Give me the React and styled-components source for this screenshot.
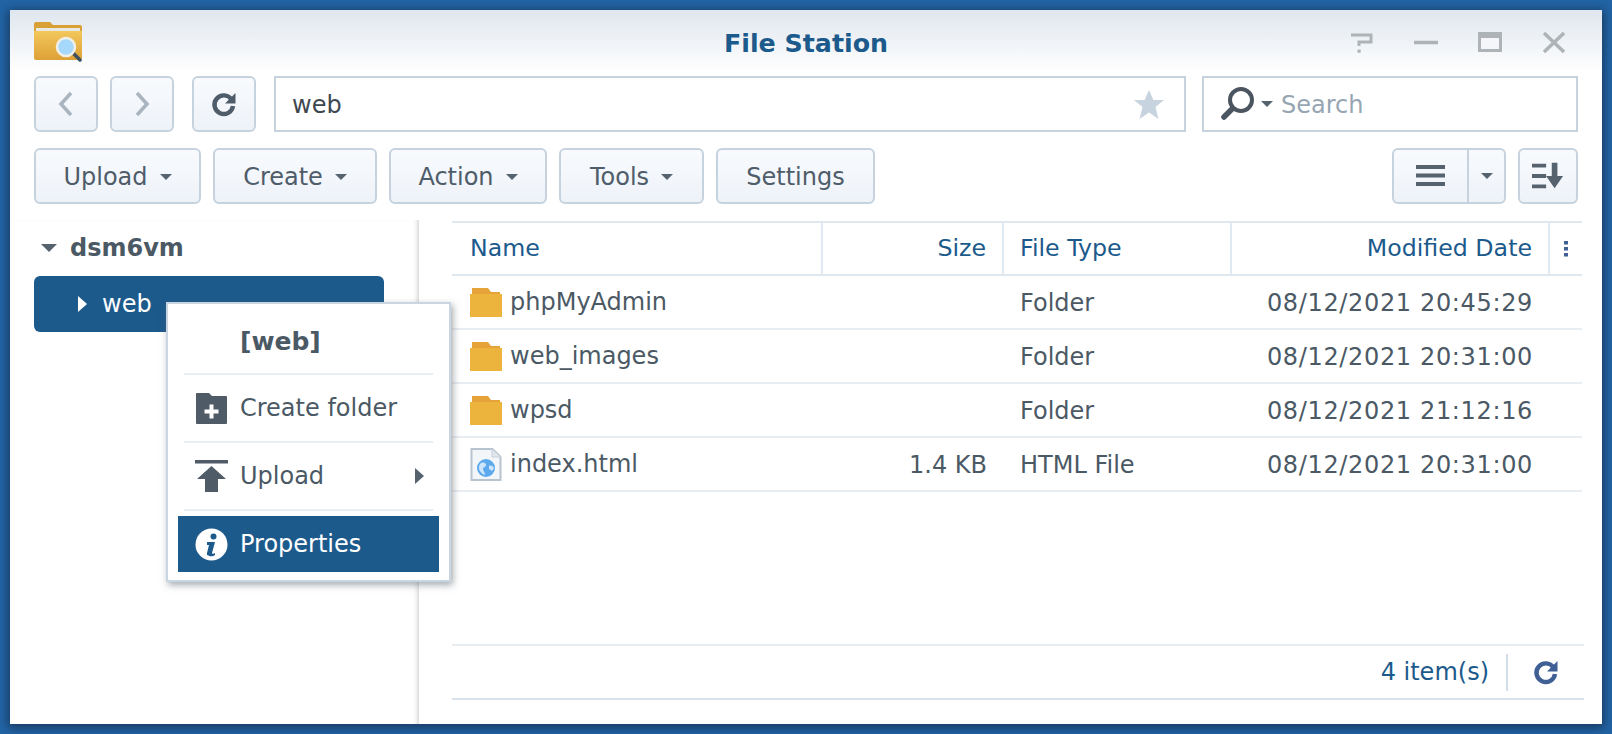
import React from 'react';
import styled, { createGlobalStyle } from 'styled-components';

const Global = createGlobalStyle`
  html, body { margin: 0; height: 734px; overflow: hidden; background: #2264a5; }
  #root { height: 734px; }
  * { box-sizing: border-box; }
`;
const Desktop = styled.div`
  width: 1612px; height: 734px; padding: 10px;
  background: #2264a5;
  font-family: "DejaVu Sans", Verdana, sans-serif;
`;
const Win = styled.div`
  width: 1592px; height: 714px; background: #fff; display: flex; flex-direction: column;
  box-shadow: 0 2px 9px 2px rgba(20, 45, 75, .75);
`;
const Head = styled.div`
  padding: 0 24px; background: linear-gradient(#dfe6ee 0, #fff 62px);
`;
const TitleBar = styled.div`
  height: 66px; display: grid; grid-template-columns: 1fr auto 1fr; align-items: center; margin: 0 0 0 0;
`;
const AppIcon = styled.svg` width: 49px; height: 40px; margin-top: -2px; `;
const Title = styled.div`
  font-weight: 700; font-size: 25.3px; color: #1c5a8c;
`;
const Controls = styled.div`
  display: flex; align-items: center; gap: 40px; margin: 0 12px 0 0; justify-self: end;
`;
const Ctl = styled.svg` width: 24px; height: 22px; display: block; `;
const NavRow = styled.div` display: flex; height: 56px; margin-bottom: 16px; `;
const Btn = styled.div`
  display: flex; align-items: center; justify-content: center; flex: none;
  width: ${p => p.$w}px; height: 56px; margin-right: ${p => p.$mr ?? 12}px;
  border: 2px solid #c6d3df; border-radius: 6px; padding-top: ${p => p.$text ? 2 : 0}px;
  background: linear-gradient(#f8fafd, #eef3f9);
  color: #4f5c69; font-size: 24px;
`;
const Caret = styled.i`
  width: 0; height: 0; display: inline-block; flex: none;
  margin-left: ${p => p.$ml ?? 12}px;
  border-left: ${p => p.$s || 6}px solid transparent; border-right: ${p => p.$s || 6}px solid transparent;
  border-top: ${p => p.$s || 6}px solid ${p => p.$c || '#56626e'};
`;
const PathBox = styled.div`
  width: 912px; height: 56px; margin-right: 16px; flex: none;
  border: 2px solid #c6d3df; background: #fff;
  display: flex; align-items: center; justify-content: space-between;
  padding: 0 20px 0 16px; font-size: 24px; color: #3d4750;
`;
const PathText = styled.span` margin-top: 2px; `;
const SearchBox = styled.div`
  width: 376px; height: 56px; flex: none;
  border: 2px solid #c6d3df; background: #fff;
  display: flex; align-items: center; padding-left: 16px;
  font-size: 24px; color: #97a6b3;
`;
const SearchLabel = styled.span` margin: 2px 0 0 8px; `;
const Toolbar = styled.div` display: flex; height: 56px; `;
const Spacer = styled.div` flex: 1; `;
const ViewGroup = styled.div`
  display: flex; width: 114px; height: 56px; margin-right: 12px; flex: none;
  border: 2px solid #c6d3df; border-radius: 6px; background: linear-gradient(#f8fafd, #eef3f9);
`;
const ViewPart = styled.div`
  display: flex; align-items: center; justify-content: center; 
  width: ${p => p.$w}px; border-left: ${p => p.$div ? '2px solid #c6d3df' : 'none'};
`;
const Content = styled.div` flex: 1; display: flex; min-height: 0; margin-top: 16px; `;
const Side = styled.div`
  width: 409px; flex: none; padding: 0 35px 0 24px;
  box-shadow: inset -5px 0 5px -4px rgba(120,120,120,.4);
`;
const Root = styled.div`
  height: 56px; display: flex; align-items: center; padding-left: 7px;
  font-weight: 700; font-size: 24px; color: #4b5965;
`;
const RootLabel = styled.span` margin-left: 13px; `;
const Selected = styled.div`
  height: 56px; border-radius: 6px; background: #1d5a8c; color: #fff;
  display: flex; align-items: center; padding-left: 44px; font-size: 24px;
`;
const Arrow = styled.i`
  width: 0; height: 0; display: inline-block; flex: none; margin-right: 15px;
  border-top: 8.5px solid transparent; border-bottom: 8.5px solid transparent;
  border-left: 9px solid ${p => p.$c};
`;
const Main = styled.div`
  flex: 1; display: flex; flex-direction: column; padding: 1px 18px 24px 33px; min-width: 0;
`;
const Grid = styled.div` flex: 1; `;
const Cols = `display: grid; grid-template-columns: 371px 181px 228px 318px 32px;`;
const HeaderRow = styled.div`
  ${Cols} height: 55px; margin-right: 2px;
  border-top: 2px solid #dfe7ef; border-bottom: 2px solid #dfe7ef;
  color: #1c5a8c; font-size: 23.7px;
`;
const HCell = styled.div`
  display: flex; align-items: center; 
  justify-content: ${p => p.$right ? 'flex-end' : p.$center ? 'center' : 'flex-start'};
  padding: ${p => p.$center ? '0' : p.$right ? '0 16px 2px 0' : `0 0 2px ${p.$first ? 18 : 16}px`};
  border-right: ${p => p.$last ? 'none' : '2px solid #dfe9f3'};
`;
const Row = styled.div`
  ${Cols} height: 54px; margin-right: 2px; border-bottom: 2px solid #e8edf2;
  color: #4b5965; font-size: 24px;
`;
const Cell = styled.div`
  display: flex; align-items: center; padding-top: 2px;
  justify-content: ${p => p.$right ? 'flex-end' : 'flex-start'};
  padding-left: ${p => p.$right ? 0 : 16}px;
  padding-right: ${p => p.$right ? 17 : 0}px;
  letter-spacing: ${p => p.$date ? '.65px' : '0'};
`;
const NameCell = styled(Cell)` padding-left: 18px; padding-top: 0; gap: 8px; `;
const NameText = styled.span` margin-top: -1px; `;
const Footer = styled.div`
  height: 56px; border-top: 2px solid #e8edf2; border-bottom: 2px solid #d9e2eb;
  display: flex; align-items: center; justify-content: flex-end; 
  color: #1c5a8c; font-size: 24px;
`;
const FootDiv = styled.div` width: 2px; height: 37px; background: #d2dde8; margin: 0 24px 0 17px; `;
const FootIcon = styled.svg` width: 28px; height: 28px; margin-right: 24px; `;
const Menu = styled.div`
  position: absolute; left: 166px; top: 302px; width: 285px; height: 280px;
  padding: 6px 10px 0; background: #fff; border: 2px solid #c9d5e0;
  box-shadow: 2px 3px 7px rgba(90,100,110,.55); color: #4b5965; font-size: 24px;
`;
const MenuHead = styled.div`
  height: 58px; padding: 5px 0 0 62px; display: flex; align-items: center; font-weight: 700; font-size: 25px;
`;
const Sep = styled.div` height: 2px; margin: 5px 6px; background: #e8edf2; `;
const Item = styled.div`
  height: 56px; display: flex; align-items: center; padding-left: 17px; gap: 12px;
  background: ${p => p.$active ? '#1d5a8c' : 'transparent'};
  color: ${p => p.$active ? '#fff' : 'inherit'};
`;
const ItemIcon = styled.svg` width: 33px; height: 33px; flex: none; `;
const ItemLabel = styled.span` flex: 1; `;

const Refresh = ({ c = '#4f5c69', s = 28 }) => (
  <svg width={s} height={s} viewBox="0 0 28 28">
    <path d="M21.5 9.5A9.3 9.3 0 1 0 23 16" fill="none" stroke={c} strokeWidth="4.4" />
    <path d="M25.5 3v10.5H15z" fill={c} />
  </svg>
);
const FolderI = () => (
  <svg width="32" height="29" viewBox="0 0 32 29" style={{ flex: 'none' }}>
    <path d="M2 0h16l3 4h9v3H2z" fill="#e5a33a" />
    <path d="M0 6h32v23H0z" fill="#ecb43d" />
  </svg>
);
const HtmlI = () => (
  <svg width="32" height="33" viewBox="0 0 32 33" style={{ flex: 'none' }}>
    <path d="M1.5 1h21L30.5 9v23h-29z" fill="#f3f6f9" stroke="#b7c3cf" strokeWidth="2" />
    <path d="M22 1v8h8.5" fill="#dfe6ed" stroke="#c6d0da" strokeWidth="1" />
    <circle cx="16" cy="20" r="9" fill="#5ca9ee" />
    <path d="M11 15c3-1 5 0 5 2s-3 2-3 4 2 3 2 6c-3-1-6-4-6-7s1-4 2-5zM19 18c2-1 4 0 5 2l-2 3-3-2z" fill="#cfe6fa" />
  </svg>
);

const rows = [
  ['phpMyAdmin', '', 'Folder', '08/12/2021 20:45:29'],
  ['web_images', '', 'Folder', '08/12/2021 20:31:00'],
  ['wpsd', '', 'Folder', '08/12/2021 21:12:16'],
  ['index.html', '1.4 KB', 'HTML File', '08/12/2021 20:31:00'],
];

export default function App() {
  return (
    <Desktop>
      <Global />
      <Win>
        <Head>
          <TitleBar>
            <AppIcon viewBox="0 0 49 40">
              <defs>
                <linearGradient id="af" x1="0" y1="0" x2="0" y2="1">
                  <stop offset="0" stopColor="#f2c75c" />
                  <stop offset="1" stopColor="#dda136" />
                </linearGradient>
              </defs>
              <path d="M0 2q0-2 2-2h14l3 3h27q2 0 2 2v6H0z" fill="#d9a036" />
              <path d="M2 6h44v3.500H2z" fill="#e9e9e4" />
              <path d="M0 9h48v27q0 2-2 2H2q-2 0-2-2z" fill="url(#af)" />
              <path d="M37 29l9 9" stroke="#3f5060" strokeWidth="3.500" strokeLinecap="round" />
              <circle cx="32" cy="25" r="9" fill="#a5d8fb" stroke="#f1efe6" strokeWidth="2.500" />
            </AppIcon>
            <Title>File Station</Title>
            <Controls>
              <Ctl viewBox="0 0 24 22"><path d="M1 3h20v7H9v4" fill="none" stroke="#aeb3b8" strokeWidth="3" /><path d="M7.500 17.500h3.200v3.200H7.500z" fill="#aeb3b8" /></Ctl>
              <Ctl viewBox="0 0 24 22"><path d="M0 10.500h24" stroke="#aeb3b8" strokeWidth="3.500" /></Ctl>
              <Ctl viewBox="0 0 24 22"><path d="M0 0h24v20H0z" fill="#aeb3b8" /><path d="M3 6h18v11H3z" fill="#f4f6f9" /></Ctl>
              <Ctl viewBox="0 0 24 22"><path d="M2 1l20 19M22 1L2 20" stroke="#aeb3b8" strokeWidth="3.500" /></Ctl>
            </Controls>
          </TitleBar>
          <NavRow>
            <Btn $w={64}><svg width="16" height="26" viewBox="0 0 16 26"><path d="M13 2L3 13l10 11" fill="none" stroke="#a9b4bf" strokeWidth="3.500" /></svg></Btn>
            <Btn $w={64} $mr={18}><svg width="16" height="26" viewBox="0 0 16 26"><path d="M3 2l10 11L3 24" fill="none" stroke="#a9b4bf" strokeWidth="3.500" /></svg></Btn>
            <Btn $w={64} $mr={18}><Refresh /></Btn>
            <PathBox>
              <PathText>web</PathText>
              <svg width="30" height="29" viewBox="0 0 30 29"><path d="M15 0l4.400 10H30l-8.500 7 3 12L15 22.500 5.500 29l3-12L0 10h10.600z" fill="#c7d3de" /></svg>
            </PathBox>
            <SearchBox>
              <svg width="34" height="34" viewBox="0 0 34 34"><circle cx="21" cy="13" r="11" fill="none" stroke="#4a5560" strokeWidth="4" /><path d="M12 22L4 30" stroke="#4a5560" strokeWidth="5.500" strokeLinecap="round" /></svg>
              <Caret $ml={7} />
              <SearchLabel>Search</SearchLabel>
            </SearchBox>
          </NavRow>
          <Toolbar>
            <Btn $w={167} $text>Upload<Caret /></Btn>
            <Btn $w={164} $text>Create<Caret /></Btn>
            <Btn $w={158} $text>Action<Caret /></Btn>
            <Btn $w={145} $text>Tools<Caret /></Btn>
            <Btn $w={159} $text>Settings</Btn>
            <Spacer />
            <ViewGroup>
              <ViewPart $w={73}><svg width="30" height="22" viewBox="0 0 30 22"><path d="M0 0h29v4H0zM0 8.500h29v4H0zM0 17h29v4H0z" fill="#56626e" /></svg></ViewPart>
              <ViewPart $w={37} $div><Caret $ml={0} /></ViewPart>
            </ViewGroup>
            <Btn $w={60} $mr={0}><svg width="32" height="28" viewBox="0 0 34 28"><path d="M0 1h15v4H0zM0 12h15v4H0zM0 23h15v4H0zM21 0h6v14h6l-9 13-9-13h6z" fill="#56626e" /></svg></Btn>
          </Toolbar>
        </Head>
        <Content>
          <Side>
            <Root><Caret $ml={0} $s={8} /><RootLabel>dsm6vm</RootLabel></Root>
            <Selected><Arrow $c="#fff" />web</Selected>
          </Side>
          <Main>
            <Grid>
              <HeaderRow>
                <HCell $first>Name</HCell>
                <HCell $right>Size</HCell>
                <HCell>File Type</HCell>
                <HCell $right>Modified Date</HCell>
                <HCell $last $center>
                  <svg width="6" height="16" viewBox="0 0 6 16"><path d="M1 0h4v3.500H1zM1 6h4v3.500H1zM1 12h4v3.500H1z" fill="#3f5f95" /></svg>
                </HCell>
              </HeaderRow>
              {rows.map(r => (
                <Row key={r[0]}>
                  <NameCell>{r[1] ? <HtmlI /> : <FolderI />}<NameText>{r[0]}</NameText></NameCell>
                  <Cell $right>{r[1]}</Cell>
                  <Cell>{r[2]}</Cell>
                  <Cell $right $date>{r[3]}</Cell>
                  <Cell />
                </Row>
              ))}
            </Grid>
            <Footer>
              4 item(s)
              <FootDiv />
              <FootIcon viewBox="0 0 28 28">
                <path d="M21.500 9.500A9.300 9.300 0 1 0 23 16" fill="none" stroke="#3f5f95" strokeWidth="4.400" />
                <path d="M25.500 3v10.500H15z" fill="#3f5f95" />
              </FootIcon>
            </Footer>
          </Main>
        </Content>
      </Win>
      <Menu>
        <MenuHead>[web]</MenuHead>
        <Sep />
        <Item>
          <ItemIcon viewBox="0 0 33 33"><path d="M1 2q0-1 1-1h12l3 3h14q1 0 1 1v26q0 1-1 1H2q-1 0-1-1z" fill="#4f5b67" /><path d="M14.500 12.500h4v5h5v4h-5v5h-4v-5h-5v-4h5z" fill="#fff" /></ItemIcon>
          <ItemLabel>Create folder</ItemLabel>
        </Item>
        <Sep />
        <Item>
          <ItemIcon viewBox="0 0 33 33"><path d="M0 0h33v3.500H0z" fill="#4f5b67" /><path d="M16.500 6L31 19h-8v13H10V19H2z" fill="#4f5b67" /></ItemIcon>
          <ItemLabel>Upload</ItemLabel>
          <Arrow $c="#56626e" />
        </Item>
        <Sep />
        <Item $active>
          <ItemIcon viewBox="0 0 33 33"><circle cx="16.500" cy="16.500" r="16" fill="#fff" /><circle cx="18.500" cy="8.500" r="3" fill="#1d5a8c" /><path d="M12 14h8l-3 11c0 1 2 1 3 0v2c-2 2-9 2-8-2l2-8h-2z" fill="#1d5a8c" /></ItemIcon>
          <ItemLabel>Properties</ItemLabel>
        </Item>
      </Menu>
    </Desktop>
  );
}
